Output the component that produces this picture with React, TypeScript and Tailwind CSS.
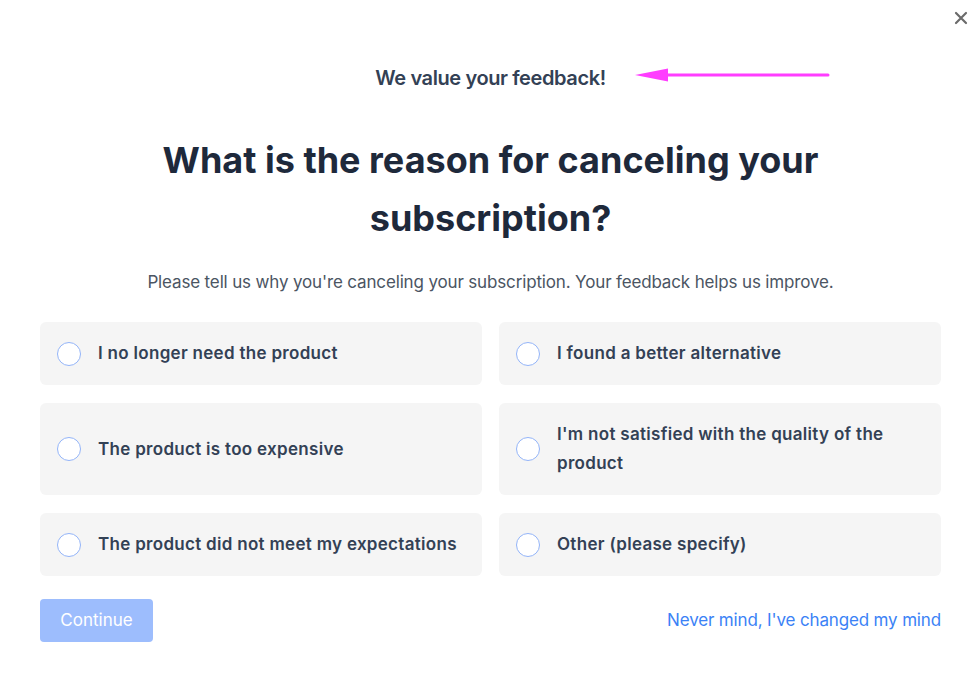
import { useState } from 'react';

const reasons = [
  'I no longer need the product',
  'I found a better alternative',
  'The product is too expensive',
  "I'm not satisfied with the quality of the product",
  'The product did not meet my expectations',
  'Other (please specify)',
];

export default function App() {
  const [selected, setSelected] = useState<number | null>(null);

  return (
    <div
      className="relative min-h-screen bg-white pl-10 pr-[38px] pt-[64px]"
      style={{ fontFamily: 'Inter, "Noto Sans", sans-serif' }}
    >
      {/* Close */}
      <button className="absolute right-[11px] top-[11px] flex h-[14px] w-[14px] items-center justify-center text-[#6b6b6b]">
        <svg viewBox="0 0 14 14" className="h-[14px] w-[14px]" fill="none" stroke="currentColor" strokeWidth="2.2" strokeLinecap="round">
          <path d="M2 2l10 10M12 2L2 12" />
        </svg>
      </button>

      {/* Annotation arrow */}
      <svg className="absolute left-[632px] top-[66px]" width="200" height="18" viewBox="0 0 200 18">
        <path d="M30 9H196" stroke="#ff3dff" strokeWidth="3" strokeLinecap="round" />
        <path d="M3 9L36 2.5V15.5Z" fill="#ff3dff" />
      </svg>

      <p className="text-center text-[20px] font-semibold leading-[28px] tracking-[-0.4px] text-[#334155]">
        We value your feedback!
      </p>

      <h1 className="mx-auto mt-[39px] max-w-[700px] text-center text-[36px] font-bold leading-[58px] text-[#1e293b]">
        What is the reason for canceling your subscription?
      </h1>

      <p className="mt-[21px] text-center text-[17px] leading-[28px] tracking-[-0.15px] text-[#4b5563]">
        Please tell us why you're canceling your subscription. Your feedback helps us improve.
      </p>

      <div className="mt-[26px] grid grid-cols-2 gap-x-[17px] gap-y-[18px]">
        {reasons.map((reason, i) => (
          <label
            key={reason}
            onClick={() => setSelected(i)}
            className="flex cursor-pointer items-center gap-[17px] rounded-md bg-[#f5f5f5] py-[17px] pl-[17px] pr-6"
          >
            <span
              className={`flex h-6 w-6 shrink-0 items-center justify-center rounded-full border bg-white ${
                selected === i ? 'border-[#3b82f6]' : 'border-[#93b4f8]'
              }`}
            >
              {selected === i && <span className="h-3 w-3 rounded-full bg-[#3b82f6]" />}
            </span>
            <span className="text-[17px] font-semibold leading-[29px] tracking-[0.3px] text-[#334155]">{reason}</span>
          </label>
        ))}
      </div>

      <div className="mt-[23px] flex items-center justify-between">
        <button className="h-[43px] w-[113px] rounded bg-[#9dbdfd] text-[17px] text-white">
          Continue
        </button>
        <a href="#" className="text-[17px] tracking-[-0.15px] text-[#3b82f6]">
          Never mind, I've changed my mind
        </a>
      </div>
    </div>
  );
}
